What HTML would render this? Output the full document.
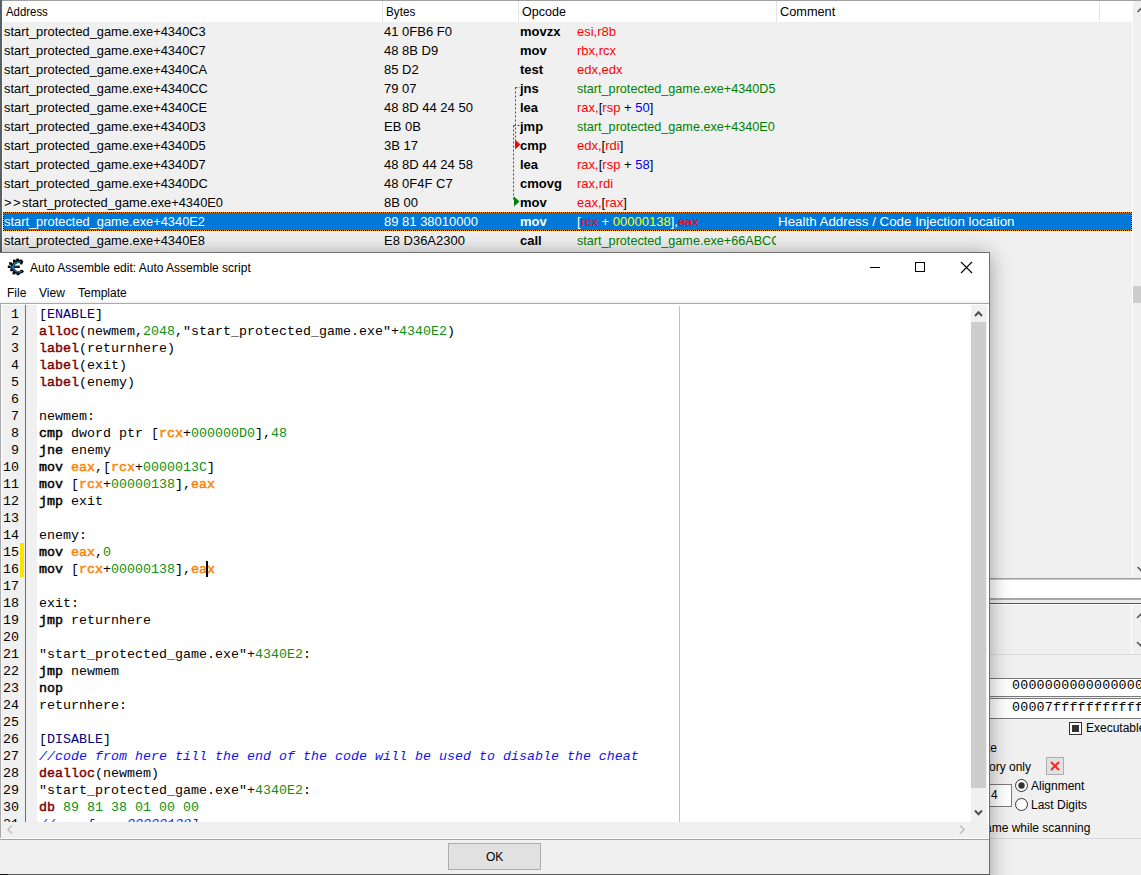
<!DOCTYPE html>
<html><head><meta charset="utf-8">
<style>
*{box-sizing:border-box;margin:0;padding:0}
html,body{width:1141px;height:875px;overflow:hidden;background:#f0f0f0;position:relative;font-family:"Liberation Sans",sans-serif}
.a{position:absolute}
.t{position:absolute;white-space:pre;line-height:1}
.hdr{font-size:13px;color:#000}
.row{font-size:13px;color:#000}
.b{font-weight:bold}
.r{color:#ff0000}
.g{color:#008000}
.bl{color:#0000ff}
.code{font-family:"Liberation Mono",monospace;font-size:13.333px;color:#000}
.kw{color:#800000;-webkit-text-stroke:0.45px #800000}
.mn{-webkit-text-stroke:0.45px #000}
.rg{color:#ff8000;-webkit-text-stroke:0.45px #ff8000}
.nm{color:#109010}
.lb{color:#000080}
.cm{color:#1414ee;font-style:italic}
.ui{font-size:12px;color:#000}
</style></head><body>
<!-- ===== background disassembler window ===== -->
<div class="a" style="left:0;top:0;width:1141px;height:1px;background:#a0a0a0"></div>
<div class="a" style="left:0;top:0;width:2px;height:252px;background:#5a6068"></div>
<div class="a" style="left:2px;top:1px;width:1px;height:251px;background:#fff"></div>
<div class="a" style="left:3px;top:1px;width:1129px;height:21px;background:#fff"></div>
<div class="a" style="left:382px;top:1px;width:1px;height:21px;background:#e5e5e5"></div>
<div class="a" style="left:518px;top:1px;width:1px;height:21px;background:#e5e5e5"></div>
<div class="a" style="left:776px;top:1px;width:1px;height:21px;background:#e5e5e5"></div>
<div class="a" style="left:1099px;top:1px;width:1px;height:21px;background:#e5e5e5"></div>
<div class="t hdr" style="left:6px;top:5px;transform:scaleX(0.876);transform-origin:0 0">Address</div>
<div class="t hdr" style="left:386px;top:5px;transform:scaleX(0.9);transform-origin:0 0">Bytes</div>
<div class="t hdr" style="left:522px;top:5px;transform:scaleX(0.963);transform-origin:0 0">Opcode</div>
<div class="t hdr" style="left:780px;top:5px;transform:scaleX(0.98);transform-origin:0 0">Comment</div>
<!-- disasm scrollbar -->
<div class="a" style="left:1132px;top:1px;width:1px;height:577px;background:#fff"></div>
<div class="a" style="left:1133px;top:286px;width:8px;height:17px;background:#cdcdcd"></div>
<svg class="a" style="left:1133px;top:0px" width="8" height="20"><path d="M4.5 12 L8 8.5 L11.5 12" fill="none" stroke="#606060" stroke-width="1.6"/></svg>
<svg class="a" style="left:1133px;top:560px" width="8" height="18"><path d="M4.5 7 L8 10.5 L11.5 7" fill="none" stroke="#606060" stroke-width="1.6"/></svg>

<div class="t row" style="left:4px;top:25px;color:#000;transform:scaleX(0.988);transform-origin:0 0">start_protected_game.exe+4340C3</div>
<div class="t row" style="left:384px;top:25px;color:#000">41 0FB6 F0</div>
<div class="t row b" style="left:520px;top:25px;color:#000">movzx</div>
<div class="t row" style="left:577px;top:25px;width:199px;height:16px;overflow:hidden"><span class="r">esi,r8b</span></div>
<div class="t row" style="left:4px;top:44px;color:#000;transform:scaleX(0.988);transform-origin:0 0">start_protected_game.exe+4340C7</div>
<div class="t row" style="left:384px;top:44px;color:#000">48 8B D9</div>
<div class="t row b" style="left:520px;top:44px;color:#000">mov</div>
<div class="t row" style="left:577px;top:44px;width:199px;height:16px;overflow:hidden"><span class="r">rbx,rcx</span></div>
<div class="t row" style="left:4px;top:63px;color:#000;transform:scaleX(0.988);transform-origin:0 0">start_protected_game.exe+4340CA</div>
<div class="t row" style="left:384px;top:63px;color:#000">85 D2</div>
<div class="t row b" style="left:520px;top:63px;color:#000">test</div>
<div class="t row" style="left:577px;top:63px;width:199px;height:16px;overflow:hidden"><span class="r">edx,edx</span></div>
<div class="t row" style="left:4px;top:82px;color:#000;transform:scaleX(0.988);transform-origin:0 0">start_protected_game.exe+4340CC</div>
<div class="t row" style="left:384px;top:82px;color:#000">79 07</div>
<div class="t row b" style="left:520px;top:82px;color:#000">jns</div>
<div class="t row" style="left:577px;top:82px;width:199px;height:16px;overflow:hidden"><span style="display:inline-block;transform:scaleX(0.972);transform-origin:0 0"><span class="g">start_protected_game.exe+4340D5</span></span></div>
<div class="t row" style="left:4px;top:101px;color:#000;transform:scaleX(0.988);transform-origin:0 0">start_protected_game.exe+4340CE</div>
<div class="t row" style="left:384px;top:101px;color:#000">48 8D 44 24 50</div>
<div class="t row b" style="left:520px;top:101px;color:#000">lea</div>
<div class="t row" style="left:577px;top:101px;width:199px;height:16px;overflow:hidden"><span class="r">rax,</span><span style="color:#000">[</span><span class="r">rsp</span><span style="color:#000"> + </span><span class="bl">50</span><span style="color:#000">]</span></div>
<div class="t row" style="left:4px;top:120px;color:#000;transform:scaleX(0.988);transform-origin:0 0">start_protected_game.exe+4340D3</div>
<div class="t row" style="left:384px;top:120px;color:#000">EB 0B</div>
<div class="t row b" style="left:520px;top:120px;color:#000">jmp</div>
<div class="t row" style="left:577px;top:120px;width:199px;height:16px;overflow:hidden"><span style="display:inline-block;transform:scaleX(0.972);transform-origin:0 0"><span class="g">start_protected_game.exe+4340E0</span></span></div>
<div class="t row" style="left:4px;top:139px;color:#000;transform:scaleX(0.988);transform-origin:0 0">start_protected_game.exe+4340D5</div>
<div class="t row" style="left:384px;top:139px;color:#000">3B 17</div>
<div class="t row b" style="left:520px;top:139px;color:#000">cmp</div>
<div class="t row" style="left:577px;top:139px;width:199px;height:16px;overflow:hidden"><span class="r">edx,</span><span style="color:#000">[</span><span class="r">rdi</span><span style="color:#000">]</span></div>
<div class="t row" style="left:4px;top:158px;color:#000;transform:scaleX(0.988);transform-origin:0 0">start_protected_game.exe+4340D7</div>
<div class="t row" style="left:384px;top:158px;color:#000">48 8D 44 24 58</div>
<div class="t row b" style="left:520px;top:158px;color:#000">lea</div>
<div class="t row" style="left:577px;top:158px;width:199px;height:16px;overflow:hidden"><span class="r">rax,</span><span style="color:#000">[</span><span class="r">rsp</span><span style="color:#000"> + </span><span class="bl">58</span><span style="color:#000">]</span></div>
<div class="t row" style="left:4px;top:177px;color:#000;transform:scaleX(0.988);transform-origin:0 0">start_protected_game.exe+4340DC</div>
<div class="t row" style="left:384px;top:177px;color:#000">48 0F4F C7</div>
<div class="t row b" style="left:520px;top:177px;color:#000">cmovg</div>
<div class="t row" style="left:577px;top:177px;width:199px;height:16px;overflow:hidden"><span class="r">rax,rdi</span></div>
<div class="t row" style="left:4px;top:196px;color:#000">&gt;</div>
<div class="t row" style="left:13px;top:196px;color:#000">&gt;</div>
<div class="t row" style="left:22px;top:196px;color:#000;transform:scaleX(0.988);transform-origin:0 0">start_protected_game.exe+4340E0</div>
<div class="t row" style="left:384px;top:196px;color:#000">8B 00</div>
<div class="t row b" style="left:520px;top:196px;color:#000">mov</div>
<div class="t row" style="left:577px;top:196px;width:199px;height:16px;overflow:hidden"><span class="r">eax,</span><span style="color:#000">[</span><span class="r">rax</span><span style="color:#000">]</span></div>
<div class="a" style="left:3px;top:212px;width:1129px;height:19px;background:#0078d7;border:1px solid #ff9020"></div>
<div class="a" style="left:3px;top:212px;width:1129px;height:19px;border:1px dotted #000"></div>
<div class="t row" style="left:4px;top:215px;color:#fff;transform:scaleX(0.988);transform-origin:0 0">start_protected_game.exe+4340E2</div>
<div class="t row" style="left:384px;top:215px;color:#fff">89 81 38010000</div>
<div class="t row b" style="left:520px;top:215px;color:#fff">mov</div>
<div class="t row" style="left:577px;top:215px;width:199px;height:16px;overflow:hidden"><span style="color:#fff">[</span><span class="r">rcx</span><span style="color:#fff"> + </span><span style="color:#ffff00">00000138</span><span style="color:#fff">],</span><span class="r">eax</span></div>
<div class="t row" style="left:778px;top:215px;color:#fff;transform:scaleX(1.026);transform-origin:0 0">Health Address / Code Injection location</div>
<div class="t row" style="left:4px;top:234px;color:#000;transform:scaleX(0.988);transform-origin:0 0">start_protected_game.exe+4340E8</div>
<div class="t row" style="left:384px;top:234px;color:#000">E8 D36A2300</div>
<div class="t row b" style="left:520px;top:234px;color:#000">call</div>
<div class="t row" style="left:577px;top:234px;width:199px;height:16px;overflow:hidden"><span style="display:inline-block;transform:scaleX(0.972);transform-origin:0 0"><span class="g">start_protected_game.exe+66ABCC</span></span></div>

<!-- arrows -->
<svg class="a" style="left:510px;top:80px" width="12" height="130">
 <path d="M5.5 7.5 H10 M5.5 7.5 V64" fill="none" stroke="#ff0000" stroke-width="1" stroke-dasharray="2,2"/>
 <path d="M5 59.5 L10.5 64.5 L5 69.5 Z" fill="#ff0000"/>
 <path d="M3.5 45.5 H10 M3.5 45.5 V121" fill="none" stroke="#008000" stroke-width="1" stroke-dasharray="2,2"/>
 <path d="M4 116.5 L9.5 121.5 L4 126.5 Z" fill="#008000"/>
</svg>

<!-- ===== right lower panels ===== -->
<div class="a" style="left:989px;top:578px;width:152px;height:1px;background:#a0a0a0"></div>
<div class="a" style="left:989px;top:579px;width:152px;height:1px;background:#c8c8c8"></div>
<div class="a" style="left:989px;top:580px;width:152px;height:18px;background:#fff"></div>
<div class="a" style="left:989px;top:598px;width:152px;height:2px;background:#a8a8a8"></div>
<div class="a" style="left:989px;top:600px;width:152px;height:3px;background:#ececec"></div>
<div class="a" style="left:989px;top:603px;width:152px;height:1px;background:#555"></div>
<div class="a" style="left:989px;top:604px;width:152px;height:1px;background:#fff"></div>
<div class="a" style="left:1131px;top:605px;width:1px;height:49px;background:#fff"></div>
<svg class="a" style="left:1131px;top:605px" width="10" height="49"><path d="M6 13 L9.5 9.5 L13 13" fill="none" stroke="#606060" stroke-width="1.6"/><path d="M6 37 L9.5 40.5 L13 37" fill="none" stroke="#606060" stroke-width="1.6"/></svg>
<div class="a" style="left:989px;top:654px;width:152px;height:1px;background:#dadada"></div>
<!-- fields -->
<div class="a" style="left:989px;top:678px;width:152px;height:1px;background:#7a7a7a"></div>
<div class="a" style="left:989px;top:679px;width:152px;height:17px;background:#fff"></div>
<div class="a" style="left:989px;top:696px;width:152px;height:1px;background:#7a7a7a"></div>
<div class="a" style="left:989px;top:698px;width:152px;height:1px;background:#7a7a7a"></div>
<div class="a" style="left:989px;top:699px;width:152px;height:19px;background:#fff"></div>
<div class="a" style="left:989px;top:718px;width:152px;height:1px;background:#7a7a7a"></div>
<div class="t code" style="left:1012px;top:679px;letter-spacing:0.2px">0000000000000000</div>
<div class="t code" style="left:1012px;top:701px;letter-spacing:0.2px">00007fffffffffff</div>
<!-- checkbox -->
<div class="a" style="left:1069px;top:722px;width:13px;height:13px;border:1px solid #333;background:#fff"></div>
<div class="a" style="left:1072px;top:725px;width:7px;height:7px;background:#333"></div>
<div class="t ui" style="left:1086px;top:722px">Executable</div>
<div class="t ui" style="left:987px;top:742px">te</div>
<div class="t ui" style="left:989px;top:761px">ory only</div>
<div class="a" style="left:1046px;top:757px;width:18px;height:18px;border:1px solid #adadad;background:#e1e1e1"></div>
<svg class="a" style="left:1046px;top:757px" width="18" height="18"><path d="M5 5 L13 13 M13 5 L5 13" stroke="#ff2020" stroke-width="2"/></svg>
<div class="a" style="left:980px;top:784px;width:32px;height:23px;border:1px solid #7a7a7a;background:#fff"></div>
<div class="t ui" style="left:991px;top:789px">4</div>
<svg class="a" style="left:1014px;top:778px" width="16" height="36">
 <circle cx="7.5" cy="7.5" r="6" fill="#fff" stroke="#333" stroke-width="1"/><circle cx="7.5" cy="7.5" r="3.2" fill="#333"/>
 <circle cx="7.5" cy="26.5" r="6" fill="#fff" stroke="#333" stroke-width="1"/>
</svg>
<div class="t ui" style="left:1031px;top:780px">Alignment</div>
<div class="t ui" style="left:1031px;top:799px">Last Digits</div>
<div class="t ui" style="left:985px;top:822px">ame while scanning</div>
<div class="a" style="left:989px;top:838px;width:152px;height:1px;background:#d8d8d8"></div>

<!-- ===== dialog ===== -->
<div class="a" style="left:-40px;top:252px;width:1030px;height:700px;background:#fff;box-shadow:0 2px 20px rgba(0,0,0,0.36)"></div>
<div class="a" style="left:0;top:252px;width:990px;height:623px;background:#fff;border-top:1px solid #6e6e6e;border-right:1px solid #6e6e6e"></div>
<svg class="a" style="left:5px;top:256px" width="22" height="22" viewBox="0 0 22 22">
 <g fill="none" stroke="#000" stroke-linecap="square">
  <path d="M7.5 13.5 C7 10,9 6,13 5.5 C15 5.3,16 5.6,16.5 6" stroke-width="2.8"/>
  <path d="M7.5 9 C7 13,10 17,14 16.5 C15.5 16.3,16.5 16,17 15.5" stroke-width="2.8"/>
  <path d="M4 10.8 H13.5" stroke-width="2.4"/>
 </g>
 <g fill="#000">
  <rect x="4.2" y="6.2" width="2.6" height="2.6"/><rect x="8" y="3.6" width="2.6" height="2.6"/>
  <rect x="11.2" y="2.6" width="2.8" height="2.8"/><rect x="14.6" y="3.6" width="2.8" height="2.8"/>
  <rect x="14.8" y="5.8" width="2.6" height="2.6"/>
  <rect x="5.2" y="12.6" width="2.6" height="2.6"/><rect x="7.6" y="15.6" width="2.8" height="2.8"/>
  <rect x="11.6" y="16.4" width="2.8" height="2.8"/><rect x="15.2" y="14.2" width="2.8" height="2.8"/>
 </g>
 <g fill="none" stroke="#1c78b4" stroke-linecap="butt">
  <path d="M7.5 13 C7 10,9 6.5,13 6 C14.5 5.8,15.5 6,16 6.3" stroke-width="1.3"/>
  <path d="M7.6 9.5 C7.3 13,10 16.3,14 16 C15.2 15.8,16 15.6,16.6 15.3" stroke-width="1.3"/>
  <path d="M5 10.8 H12.8" stroke-width="0.9"/>
 </g>
</svg>
<div class="t ui" style="left:30px;top:262px">Auto Assemble edit: Auto Assemble script</div>
<div class="a" style="left:870px;top:267px;width:10px;height:1px;background:#000"></div>
<div class="a" style="left:915px;top:262px;width:10px;height:10px;border:1px solid #000"></div>
<svg class="a" style="left:960px;top:261px" width="13" height="13"><path d="M1 1 L12 12 M12 1 L1 12" stroke="#000" stroke-width="1.1"/></svg>
<div class="t ui" style="left:7px;top:287px">File</div>
<div class="t ui" style="left:39px;top:287px">View</div>
<div class="t ui" style="left:78px;top:287px">Template</div>
<div class="a" style="left:0;top:300px;width:989px;height:3px;background:linear-gradient(#fff,#f0f0f0)"></div>

<!-- editor frame -->
<div class="a" style="left:0;top:303px;width:989px;height:1px;background:#a7a9ac"></div>
<div class="a" style="left:0;top:304px;width:989px;height:535px;background:#fff;border-left:1px solid #a7a9ac"></div>
<div class="a" style="left:2px;top:305px;width:35px;height:517px;background:#f0f0f0"></div>
<div class="a" style="left:25px;top:305px;width:1px;height:517px;background:#707070"></div>
<div class="a" style="left:20px;top:543px;width:4px;height:34px;background:#ffe400"></div>
<div class="a" style="left:679px;top:306px;width:1px;height:516px;background:#c0c0c0"></div>

<div class="t code ln" style="left:3px;top:308px;width:16px;text-align:right">1</div>
<div class="t code" style="left:39px;top:308px">[<span class="lb">ENABLE</span>]</div>
<div class="t code ln" style="left:3px;top:325px;width:16px;text-align:right">2</div>
<div class="t code" style="left:39px;top:325px"><span class="kw">alloc</span>(newmem,<span class="nm">2048</span>,&quot;start_protected_game.exe&quot;+<span class="nm">4340E2</span>)</div>
<div class="t code ln" style="left:3px;top:342px;width:16px;text-align:right">3</div>
<div class="t code" style="left:39px;top:342px"><span class="kw">label</span>(returnhere)</div>
<div class="t code ln" style="left:3px;top:359px;width:16px;text-align:right">4</div>
<div class="t code" style="left:39px;top:359px"><span class="kw">label</span>(exit)</div>
<div class="t code ln" style="left:3px;top:376px;width:16px;text-align:right">5</div>
<div class="t code" style="left:39px;top:376px"><span class="kw">label</span>(enemy)</div>
<div class="t code ln" style="left:3px;top:393px;width:16px;text-align:right">6</div>
<div class="t code" style="left:39px;top:393px"></div>
<div class="t code ln" style="left:3px;top:410px;width:16px;text-align:right">7</div>
<div class="t code" style="left:39px;top:410px">newmem:</div>
<div class="t code ln" style="left:3px;top:427px;width:16px;text-align:right">8</div>
<div class="t code" style="left:39px;top:427px"><span class="mn">cmp</span> dword ptr [<span class="rg">rcx</span>+<span class="nm">000000D0</span>],<span class="nm">48</span></div>
<div class="t code ln" style="left:3px;top:444px;width:16px;text-align:right">9</div>
<div class="t code" style="left:39px;top:444px"><span class="mn">jne</span> enemy</div>
<div class="t code ln" style="left:3px;top:461px;width:16px;text-align:right">10</div>
<div class="t code" style="left:39px;top:461px"><span class="mn">mov</span> <span class="rg">eax</span>,[<span class="rg">rcx</span>+<span class="nm">0000013C</span>]</div>
<div class="t code ln" style="left:3px;top:478px;width:16px;text-align:right">11</div>
<div class="t code" style="left:39px;top:478px"><span class="mn">mov</span> [<span class="rg">rcx</span>+<span class="nm">00000138</span>],<span class="rg">eax</span></div>
<div class="t code ln" style="left:3px;top:495px;width:16px;text-align:right">12</div>
<div class="t code" style="left:39px;top:495px"><span class="mn">jmp</span> exit</div>
<div class="t code ln" style="left:3px;top:512px;width:16px;text-align:right">13</div>
<div class="t code" style="left:39px;top:512px"></div>
<div class="t code ln" style="left:3px;top:529px;width:16px;text-align:right">14</div>
<div class="t code" style="left:39px;top:529px">enemy:</div>
<div class="t code ln" style="left:3px;top:546px;width:16px;text-align:right">15</div>
<div class="t code" style="left:39px;top:546px"><span class="mn">mov</span> <span class="rg">eax</span>,<span class="nm">0</span></div>
<div class="t code ln" style="left:3px;top:563px;width:16px;text-align:right">16</div>
<div class="t code" style="left:39px;top:563px"><span class="mn">mov</span> [<span class="rg">rcx</span>+<span class="nm">00000138</span>],<span class="rg">eax</span></div>
<div class="t code ln" style="left:3px;top:580px;width:16px;text-align:right">17</div>
<div class="t code" style="left:39px;top:580px"></div>
<div class="t code ln" style="left:3px;top:597px;width:16px;text-align:right">18</div>
<div class="t code" style="left:39px;top:597px">exit:</div>
<div class="t code ln" style="left:3px;top:614px;width:16px;text-align:right">19</div>
<div class="t code" style="left:39px;top:614px"><span class="mn">jmp</span> returnhere</div>
<div class="t code ln" style="left:3px;top:631px;width:16px;text-align:right">20</div>
<div class="t code" style="left:39px;top:631px"></div>
<div class="t code ln" style="left:3px;top:648px;width:16px;text-align:right">21</div>
<div class="t code" style="left:39px;top:648px">&quot;start_protected_game.exe&quot;+<span class="nm">4340E2</span>:</div>
<div class="t code ln" style="left:3px;top:665px;width:16px;text-align:right">22</div>
<div class="t code" style="left:39px;top:665px"><span class="mn">jmp</span> newmem</div>
<div class="t code ln" style="left:3px;top:682px;width:16px;text-align:right">23</div>
<div class="t code" style="left:39px;top:682px"><span class="mn">nop</span></div>
<div class="t code ln" style="left:3px;top:699px;width:16px;text-align:right">24</div>
<div class="t code" style="left:39px;top:699px">returnhere:</div>
<div class="t code ln" style="left:3px;top:716px;width:16px;text-align:right">25</div>
<div class="t code" style="left:39px;top:716px"></div>
<div class="t code ln" style="left:3px;top:733px;width:16px;text-align:right">26</div>
<div class="t code" style="left:39px;top:733px">[<span class="lb">DISABLE</span>]</div>
<div class="t code ln" style="left:3px;top:750px;width:16px;text-align:right">27</div>
<div class="t code" style="left:39px;top:750px"><span class="cm">//code from here till the end of the code will be used to disable the cheat</span></div>
<div class="t code ln" style="left:3px;top:767px;width:16px;text-align:right">28</div>
<div class="t code" style="left:39px;top:767px"><span class="kw">dealloc</span>(newmem)</div>
<div class="t code ln" style="left:3px;top:784px;width:16px;text-align:right">29</div>
<div class="t code" style="left:39px;top:784px">&quot;start_protected_game.exe&quot;+<span class="nm">4340E2</span>:</div>
<div class="t code ln" style="left:3px;top:801px;width:16px;text-align:right">30</div>
<div class="t code" style="left:39px;top:801px"><span class="kw">db</span> <span class="nm">89 81 38 01 00 00</span></div>
<div class="t code ln" style="left:3px;top:818px;width:16px;text-align:right">31</div>
<div class="t code" style="left:39px;top:818px;height:3px;overflow:hidden;margin-top:1px"><div style="margin-top:-1px"><span class="cm">//    [    00000138]</span></div></div>
<div class="a" style="left:206px;top:561px;width:2px;height:16px;background:#000"></div>

<!-- editor scrollbars -->
<div class="a" style="left:971px;top:305px;width:16px;height:517px;background:#f0f0f0"></div>
<div class="a" style="left:971px;top:322px;width:15px;height:466px;background:#cdcdcd"></div>
<svg class="a" style="left:971px;top:305px" width="16" height="17"><path d="M4 11 L7.5 7.3 L11 11" fill="none" stroke="#505050" stroke-width="2"/></svg>
<svg class="a" style="left:971px;top:805px" width="16" height="17"><path d="M4 5.5 L7.5 9.2 L11 5.5" fill="none" stroke="#505050" stroke-width="2"/></svg>
<div class="a" style="left:1px;top:822px;width:987px;height:16px;background:#f0f0f0"></div>
<svg class="a" style="left:1px;top:822px" width="16" height="16"><path d="M11 3.5 L7 7.5 L11 11.5" fill="none" stroke="#c0c0c0" stroke-width="1.6"/></svg>
<svg class="a" style="left:955px;top:822px" width="16" height="16"><path d="M5 3.5 L9 7.5 L5 11.5" fill="none" stroke="#c0c0c0" stroke-width="1.6"/></svg>
<div class="a" style="left:0;top:838px;width:989px;height:1px;background:#fff"></div>
<div class="a" style="left:0;top:839px;width:989px;height:1px;background:#a0a0a0"></div>

<!-- bottom panel -->
<div class="a" style="left:0;top:840px;width:989px;height:34px;background:#f0f0f0"></div>
<div class="a" style="left:448px;top:843px;width:93px;height:27px;background:#e1e1e1;border:1px solid #adadad"></div>
<div class="t ui" style="left:486px;top:851px">OK</div>
<div class="a" style="left:0;top:874px;width:990px;height:1px;background:#5a5a5a"></div><div class="a" style="left:0;top:874px;width:8px;height:1px;background:#111"></div>
</body></html>
